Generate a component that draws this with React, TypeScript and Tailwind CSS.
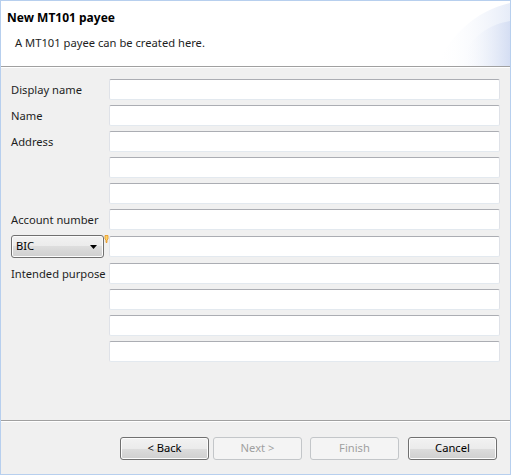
import React from "react";

function Field() {
  return (
    <div className="h-[21px] flex-1 bg-white rounded-[2px] border border-[#dfe2e8] border-t-[#abadb3] border-b-[#e3e9ef]" />
  );
}

function Row({ label, children }: { label?: React.ReactNode; children?: React.ReactNode }) {
  return (
    <div className="flex items-center h-[21px]">
      <div className="w-[99px] shrink-0 text-[11.2px] text-[#1e1e1e] leading-[16px] pl-[1px] whitespace-nowrap">{label}</div>
      {children ?? <Field />}
    </div>
  );
}

function Btn({ label, disabled }: { label: string; disabled?: boolean }) {
  return disabled ? (
    <div className="w-[89px] h-[23px] rounded-[3px] border border-[#c3c6c9] bg-[#f4f4f4] flex items-center justify-center text-[11.2px] text-[#a0a0a0]">
      {label}
    </div>
  ) : (
    <div className="w-[89px] h-[23px] rounded-[3px] border border-[#707070] bg-[linear-gradient(to_bottom,#f2f2f2_0%,#ebebeb_50%,#dddddd_50%,#cfcfcf_100%)] shadow-[inset_0_0_0_1px_#fcfcfc] flex items-center justify-center text-[11.2px] text-black">
      {label}
    </div>
  );
}

export default function App() {
  return (
    <div
      className="w-[511px] h-[475px] border border-[#b7cfee] bg-[#f0f0f0] flex flex-col overflow-hidden"
      style={{ fontFamily: '"Noto Sans", "Open Sans", sans-serif' }}
    >
      <div className="relative h-[65px] bg-white shrink-0 px-[6px] pt-[8px]">
        <svg className="absolute right-0 top-0" width="80" height="65" viewBox="0 0 80 65">
          <defs>
            <linearGradient id="g1" x1="0" y1="0" x2="1" y2="0">
              <stop offset="0" stopColor="#ffffff" stopOpacity="0" />
              <stop offset="1" stopColor="#e6ecf8" />
            </linearGradient>
            <linearGradient id="g2" x1="0" y1="0" x2="1" y2="0">
              <stop offset="0" stopColor="#ffffff" stopOpacity="0" />
              <stop offset="1" stopColor="#d5def3" />
            </linearGradient>
          </defs>
          <path d="M 6 65 C 20 35, 45 10, 80 2 L 80 65 Z" fill="url(#g1)" />
          <path d="M 30 65 C 36 40, 55 24, 80 20 L 80 65 Z" fill="url(#g2)" />
        </svg>
        <div className="relative text-[12px] font-bold leading-[18px] text-black">New MT101 payee</div>
        <div className="relative text-[11.2px] leading-[16px] text-[#1e1e1e] pl-[8px] mt-[8px]">
          A MT101 payee can be created here.
        </div>
      </div>
      <div className="h-[2px] shrink-0 border-t border-[#a0a0a0] bg-white" />
      <div className="flex-1 flex flex-col gap-[5px] pt-[11px] pl-[9px] pr-[10px]">
        <Row label="Display name" />
        <Row label="Name" />
        <Row label="Address" />
        <Row />
        <Row />
        <Row label="Account number" />
        <div className="flex items-center h-[23px]">
          <div className="relative w-[99px] shrink-0">
            <div className="ml-[1px] w-[93px] h-[23px] rounded-[3px] border border-[#707070] bg-[linear-gradient(to_bottom,#f2f2f2_0%,#ebebeb_50%,#dddddd_50%,#cfcfcf_100%)] shadow-[inset_0_0_0_1px_#fcfcfc] flex items-center pl-[4px] pr-[6px] text-[11.2px] text-black">
              <span className="flex-1">BIC</span>
              <svg width="7" height="4" viewBox="0 0 7 4">
                <path d="M0 0 L7 0 L3.5 4 Z" fill="#000" />
              </svg>
            </div>
            <svg className="absolute left-[94px] top-0" width="5" height="8" viewBox="0 0 5 8">
              <path d="M1 0.5 H4 V4 L3 5 V7.5 H2 V5 L1 4 Z" fill="#fbd36a" stroke="#e8941c" strokeWidth="0.8" />
            </svg>
          </div>
          <Field />
        </div>
        <Row label="Intended purpose" />
        <Row />
        <Row />
        <Row />
      </div>
      <div className="h-[2px] shrink-0 border-t border-[#a0a0a0] bg-white" />
      <div className="h-[52px] shrink-0 flex items-start pt-[15px] pl-[119px] pr-[12px]">
        <Btn label="< Back" />
        <div className="ml-[4px]">
          <Btn label="Next >" disabled />
        </div>
        <div className="ml-[8px]">
          <Btn label="Finish" disabled />
        </div>
        <div className="ml-[9px]">
          <Btn label="Cancel" />
        </div>
      </div>
    </div>
  );
}
